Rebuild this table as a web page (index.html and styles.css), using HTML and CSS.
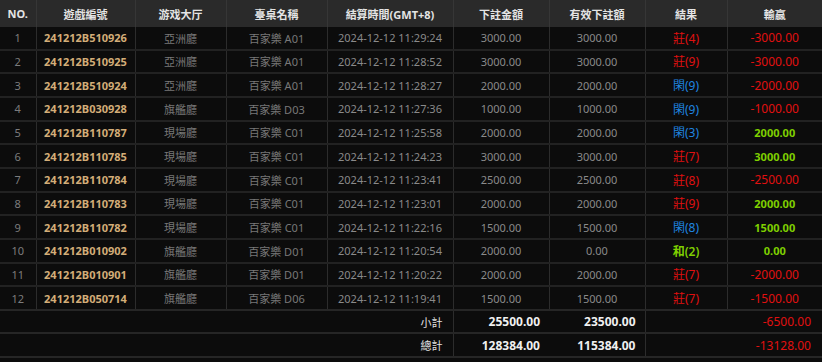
FILE: index.html
```html
<!DOCTYPE html>
<html lang="zh-Hant">
<head>
<meta charset="utf-8">
<title>注單</title>
<link rel="stylesheet" href="styles.css">
</head>
<body>
<table class="report">
  <colgroup>
    <col class="c-no"><col class="c-id"><col class="c-hall"><col class="c-table"><col class="c-time"><col class="c-bet"><col class="c-valid"><col class="c-result"><col class="c-win">
  </colgroup>
  <thead>
    <tr>
      <th>NO.</th><th>遊戲編號</th><th>游戏大厅</th><th>臺桌名稱</th><th>結算時間(GMT+8)</th><th>下註金額</th><th>有效下註額</th><th>結果</th><th>輸贏</th>
    </tr>
  </thead>
  <tbody>
    <tr><td class="no">1</td><td class="gid">241212B510926</td><td class="dim">亞洲廳</td><td class="dim">百家樂 A01</td><td class="mute">2024-12-12 11:29:24</td><td class="mute">3000.00</td><td class="mute">3000.00</td><td class="res red">莊(4)</td><td class="win red">-3000.00</td></tr>
    <tr><td class="no">2</td><td class="gid">241212B510925</td><td class="dim">亞洲廳</td><td class="dim">百家樂 A01</td><td class="mute">2024-12-12 11:28:52</td><td class="mute">3000.00</td><td class="mute">3000.00</td><td class="res red">莊(9)</td><td class="win red">-3000.00</td></tr>
    <tr><td class="no">3</td><td class="gid">241212B510924</td><td class="dim">亞洲廳</td><td class="dim">百家樂 A01</td><td class="mute">2024-12-12 11:28:27</td><td class="mute">2000.00</td><td class="mute">2000.00</td><td class="res blue">閑(9)</td><td class="win red">-2000.00</td></tr>
    <tr><td class="no">4</td><td class="gid">241212B030928</td><td class="dim">旗艦廳</td><td class="dim">百家樂 D03</td><td class="mute">2024-12-12 11:27:36</td><td class="mute">1000.00</td><td class="mute">1000.00</td><td class="res blue">閑(9)</td><td class="win red">-1000.00</td></tr>
    <tr><td class="no">5</td><td class="gid">241212B110787</td><td class="dim">現場廳</td><td class="dim">百家樂 C01</td><td class="mute">2024-12-12 11:25:58</td><td class="mute">2000.00</td><td class="mute">2000.00</td><td class="res blue">閑(3)</td><td class="win green">2000.00</td></tr>
    <tr><td class="no">6</td><td class="gid">241212B110785</td><td class="dim">現場廳</td><td class="dim">百家樂 C01</td><td class="mute">2024-12-12 11:24:23</td><td class="mute">3000.00</td><td class="mute">3000.00</td><td class="res red">莊(7)</td><td class="win green">3000.00</td></tr>
    <tr><td class="no">7</td><td class="gid">241212B110784</td><td class="dim">現場廳</td><td class="dim">百家樂 C01</td><td class="mute">2024-12-12 11:23:41</td><td class="mute">2500.00</td><td class="mute">2500.00</td><td class="res red">莊(8)</td><td class="win red">-2500.00</td></tr>
    <tr><td class="no">8</td><td class="gid">241212B110783</td><td class="dim">現場廳</td><td class="dim">百家樂 C01</td><td class="mute">2024-12-12 11:23:01</td><td class="mute">2000.00</td><td class="mute">2000.00</td><td class="res red">莊(9)</td><td class="win green">2000.00</td></tr>
    <tr><td class="no">9</td><td class="gid">241212B110782</td><td class="dim">現場廳</td><td class="dim">百家樂 C01</td><td class="mute">2024-12-12 11:22:16</td><td class="mute">1500.00</td><td class="mute">1500.00</td><td class="res blue">閑(8)</td><td class="win green">1500.00</td></tr>
    <tr><td class="no">10</td><td class="gid">241212B010902</td><td class="dim">旗艦廳</td><td class="dim">百家樂 D01</td><td class="mute">2024-12-12 11:20:54</td><td class="mute">2000.00</td><td class="mute">0.00</td><td class="res green">和(2)</td><td class="win green">0.00</td></tr>
    <tr><td class="no">11</td><td class="gid">241212B010901</td><td class="dim">旗艦廳</td><td class="dim">百家樂 D01</td><td class="mute">2024-12-12 11:20:22</td><td class="mute">2000.00</td><td class="mute">2000.00</td><td class="res red">莊(7)</td><td class="win red">-2000.00</td></tr>
    <tr><td class="no">12</td><td class="gid">241212B050714</td><td class="dim">旗艦廳</td><td class="dim">百家樂 D06</td><td class="mute">2024-12-12 11:19:41</td><td class="mute">1500.00</td><td class="mute">1500.00</td><td class="res red">莊(7)</td><td class="win red">-1500.00</td></tr>
  </tbody>
  <tfoot>
    <tr><td colspan="5" class="label">小計</td><td class="sum">25500.00</td><td class="sum sum-2">23500.00</td><td colspan="2" class="total red">-6500.00</td></tr>
    <tr><td colspan="5" class="label">總計</td><td class="sum">128384.00</td><td class="sum sum-2">115384.00</td><td colspan="2" class="total red">-13128.00</td></tr>
  </tfoot>
</table>
</body>
</html>
```
FILE: styles.css
```css
html, body {
  margin: 0;
  padding: 0;
  background: #0c0c0c;
}
body {
  font-family: "Noto Sans", "Noto Sans CJK TC", sans-serif;
  font-size: 11px;
  color: #8a8a8a;
}
.report {
  width: 822px;
  border-collapse: collapse;
  table-layout: fixed;
  border-bottom: 2px solid #262626;
}
.c-no { width: 36px; }
.c-id { width: 99px; }
.c-hall { width: 91px; }
.c-table { width: 101px; }
.c-time { width: 126px; }
.c-bet { width: 96px; }
.c-valid { width: 96px; }
.c-result { width: 82px; }
.c-win { width: 95px; }

.report th {
  height: 27px;
  padding: 0;
  background: #2a2a2a;
  color: #e4e4e4;
  font-weight: 700;
  font-size: 11px;
  border-left: 1px solid #363636;
  text-align: center;
}
.report th:first-child { border-left: none; }
.report td {
  height: 21.67px;
  padding: 0;
  text-align: center;
  border-left: 1px solid #2c2c2c;
  border-top: 2px solid #222;
  white-space: nowrap;
  font-size: 11px;
}
.report td:first-child { border-left: none; }
.report tbody tr:first-child td { border-top: none; }

.report td.no { color: #7c7c7c; }
.report td.gid { color: #d3ad78; font-weight: 700; }
.report td.dim { color: #787878; }
.report td.mute { color: #8a8a8a; }
.report td.red { color: #e01010; }
.report td.blue { color: #1f86e0; }
.report td.green { color: #7fd000; font-weight: 700; }
.report td.res { font-size: 12px; }
.report td.win.red { font-size: 12px; }
.report td.res.green { font-weight: 600; }

.report tfoot td {
  height: 21.5px;
  border-top: 2px solid #262626;
}
.report td.label {
  text-align: right;
  padding-right: 10px;
  color: #e2e2e2;
}
.report td.sum {
  text-align: right;
  padding-right: 9px;
  color: #f0f0f0;
  font-weight: 700;
  font-size: 12px;
}
.report td.sum-2 { border-left: none; }
.report td.total {
  text-align: right;
  padding-right: 11px;
  font-size: 12px;
}
```
